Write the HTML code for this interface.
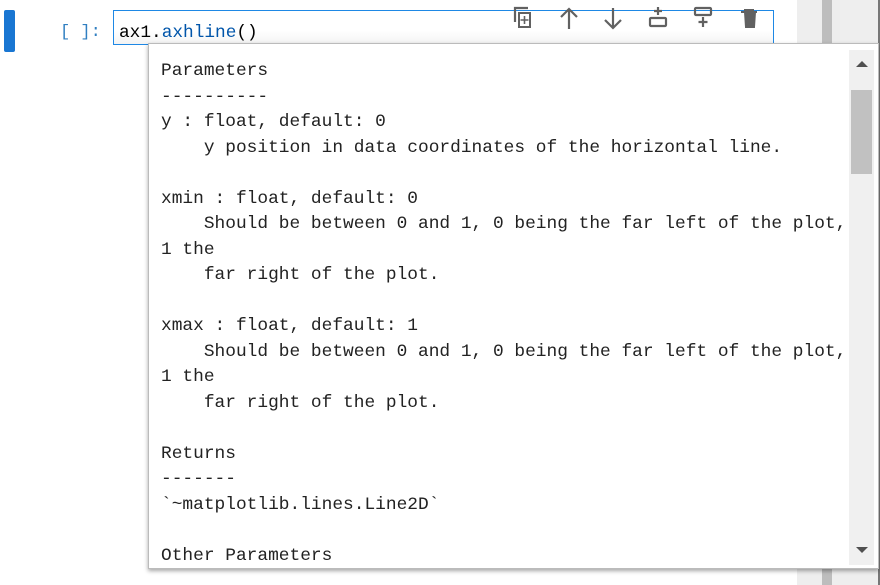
<!DOCTYPE html>
<html><head><style>
body{margin:0;width:880px;height:585px;background:#fff;position:relative;overflow:hidden;font-family:"Liberation Mono",monospace;}
.abs{position:absolute}
.side{left:797px;top:0;width:81px;height:585px;background:#eeeeee}
.strip{left:822px;top:0;width:10px;height:585px;background:#bdbdbd}
.edge{left:878px;top:0;width:2px;height:585px;background:#777}
.bar{left:4px;top:10px;width:11px;height:42px;background:#1976d2;border-radius:2px}
.prompt{left:60px;top:23px;font-size:17px;color:#307fc1}
.cell{left:113px;top:10px;width:659px;height:33px;border:1px solid #1e88e5;background:linear-gradient(#fff 60%,#f3f3f3)}
.code{left:119px;top:23px;font-size:17.8px;color:#000}
.tip{left:148px;top:43px;width:729px;height:524px;background:#fff;border:1px solid #bbb;box-shadow:0 2px 4px rgba(0,0,0,.35)}
pre{margin:0;position:absolute;left:12px;top:15px;font-family:"Liberation Mono",monospace;font-size:17.85px;line-height:25.5px;color:#222}
.sb{left:700px;top:6px;width:25px;height:515px;background:#f0f0f0}
.thumb{left:2px;top:40px;width:21px;height:84px;background:#c1c1c1}
svg{position:absolute}
</style></head><body>
<div class="abs side"></div><div class="abs strip"></div><div class="abs edge"></div>
<div class="abs bar"></div>
<div class="abs prompt">[ ]:</div>
<div class="abs cell"></div>
<div class="abs code">ax1.<span style="color:#0055aa">axhline</span>()</div>
<svg style="left:510px;top:5px" width="260" height="28" fill="none" stroke="#616161" stroke-width="2.2">
<path d="M5 17V3h13"/><rect x="9" y="8" width="11" height="14" stroke-width="2"/><path d="M14.5 11v8M10.5 15h8" stroke-width="1.6"/>
<path d="M59 24V4M51 12l8-8 8 8"/>
<path d="M103 3v20M95 15l8 8 8-8"/>
<path d="M148 2v8M144 6h8"/><rect x="140" y="13" width="16" height="8" rx="1"/>
<rect x="185" y="3" width="16" height="7" rx="1"/><path d="M193 12v10M188.5 17h9"/>
<path d="M231 7h16M235 7l1 15h8l1-15M234 5h10" fill="#616161" stroke-width="2"/>
</svg>
<div class="abs tip">
<pre>Parameters
----------
y : float, default: 0
    y position in data coordinates of the horizontal line.

xmin : float, default: 0
    Should be between 0 and 1, 0 being the far left of the plot,
1 the
    far right of the plot.

xmax : float, default: 1
    Should be between 0 and 1, 0 being the far left of the plot,
1 the
    far right of the plot.

Returns
-------
`~matplotlib.lines.Line2D`

Other Parameters</pre>
<div class="abs sb"><div class="abs thumb"></div>
<svg style="left:7px;top:10px" width="12" height="8"><path d="M0 7L6 1 12 7Z" fill="#505050"/></svg>
<svg style="left:7px;top:496px" width="12" height="8"><path d="M0 1L6 7 12 1Z" fill="#505050"/></svg>
</div>
</div>
</body></html>
